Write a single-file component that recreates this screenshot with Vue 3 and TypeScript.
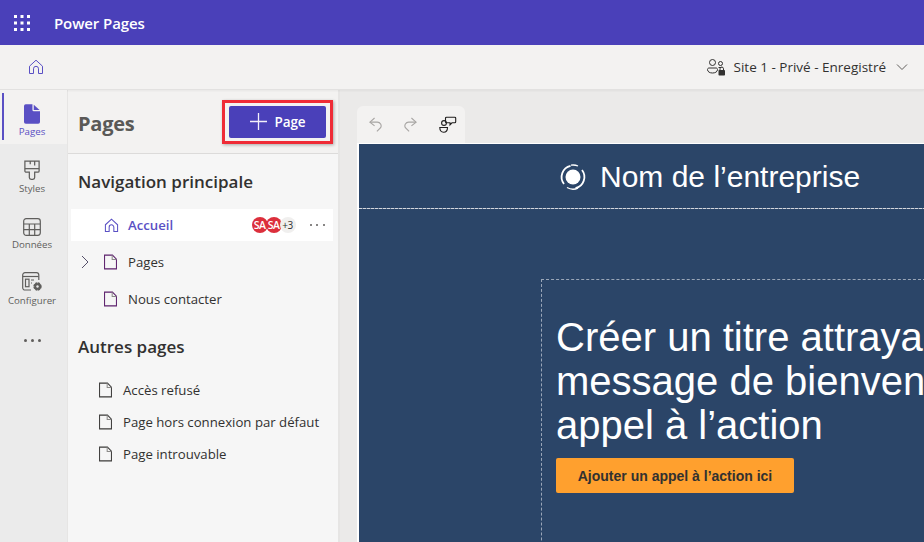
<script setup lang="ts">
interface NavItem { label: string; icon: string; active?: boolean }
const rail: NavItem[] = [
  { label: 'Pages', icon: 'pages', active: true },
  { label: 'Styles', icon: 'styles' },
  { label: 'Données', icon: 'data' },
  { label: 'Configurer', icon: 'config' },
]
const others = ['Accès refusé', 'Page hors connexion par défaut', 'Page introuvable']
const dots = [0, 1, 2]
</script>

<template>
  <div class="app">
    <header class="topbar">
      <svg class="waffle" width="18" height="18" viewBox="0 0 18 18" fill="#fff">
        <template v-for="y in dots" :key="y">
          <rect v-for="x in dots" :key="x" :x="1 + x * 6.5" :y="1 + y * 6.5" width="3" height="3" />
        </template>
      </svg>
      <span class="brand">Power Pages</span>
    </header>

    <div class="subbar">
      <svg class="home" width="16" height="16" viewBox="0 0 16 16" fill="none" stroke="#5a50c4" stroke-width="1">
        <path d="M1.5 7.2 8 1.2l6.5 6v7.3h-4V9.8a2.5 2.5 0 0 0-5 0v4.700h-4z" />
      </svg>
      <div class="site">
        <svg width="20" height="20" viewBox="0 0 20 20" fill="none" stroke="#323130">
          <circle cx="6.5" cy="5.5" r="3" />
          <path d="M1.5 12.5c0-1 .8-1.5 1.5-1.5h7c1 0 1.500.7 1.500 1.500 0 2.500-2.500 3.500-5 3.500s-5-1-5-3.500z" />
          <circle cx="14.500" cy="6.500" r="2" />
          <path d="M12.500 10.500h3" />
          <rect x="12.500" y="13" width="6.500" height="5.500" rx=".8" fill="#323130" stroke="none" />
          <path d="M14 13v-1.200a1.700 1.700 0 0 1 3.500 0V13" />
        </svg>
        <span class="site-text">Site 1 - Privé - Enregistré</span>
        <svg width="12" height="12" viewBox="0 0 12 12" fill="none" stroke="#605e5c" class="chev">
          <path d="M1 3.500 6 8.500l5-5" />
        </svg>
      </div>
    </div>

    <div class="workspace">
      <nav class="rail">
        <div v-for="item in rail" :key="item.label" class="rail-item" :class="{ active: item.active }">
          <svg v-if="item.icon === 'pages'" width="16" height="20" viewBox="0 0 18 22">
            <path fill="#5a50c4" d="M2 0h7.500v6.500a1.500 1.500 0 0 0 1.500 1.500h7v12a2 2 0 0 1-2 2H2a2 2 0 0 1-2-2V2a2 2 0 0 1 2-2z" />
            <path fill="#5a50c4" d="M11 .5 17.500 6.500H11z" />
          </svg>
          <svg v-else-if="item.icon === 'styles'" width="16" height="20" viewBox="0 0 18 22" fill="none" stroke="#5f5e5c" stroke-width="1.400">
            <path d="M1 1h16v11a1.500 1.500 0 0 1-1.500 1.500h-3.500v6a2 2 0 0 1-2 2H8a2 2 0 0 1-2-2v-6H2.500A1.500 1.500 0 0 1 1 12z" />
            <path d="M1 9.500h16" />
            <path d="M7 1v3.500M12 1v5" />
          </svg>
          <svg v-else-if="item.icon === 'data'" width="18" height="18" viewBox="0 0 18 18" fill="none" stroke="#5f5e5c" stroke-width="1.200">
            <rect x=".7" y=".7" width="16.600" height="16.600" rx="2.500" />
            <path d="M.7 6h16.600M.7 11.700h16.600M6.300 6v11.300M11.700 6v11.300" />
          </svg>
          <svg v-else width="21" height="20" viewBox="0 0 21 20" fill="none" stroke="#5f5e5c" stroke-width="1.200">
            <path d="M9 18H3a2.300 2.300 0 0 1-2.300-2.300V3A2.300 2.300 0 0 1 3 .7h11.500A2.300 2.300 0 0 1 16.800 3v5" />
            <path d="M.7 4.500h16" />
            <rect x="3.500" y="7.200" width="3.500" height="7.500" />
            <path d="M9 8h3M9 11h1" />
            <circle cx="15.500" cy="14.500" r="3.200" fill="#5f5e5c" stroke-dasharray="2 .5" stroke-width="2" />
            <circle cx="15.500" cy="14.500" r="1.200" fill="#ebebeb" stroke="none" />
          </svg>
          <span class="rail-label">{{ item.label }}</span>
        </div>
        <div class="rail-more"><i></i><i></i><i></i></div>
      </nav>

      <aside class="panel">
        <div class="panel-head">
          <h1 class="panel-title">Pages</h1>
          <div class="page-btn-ring">
            <button class="page-btn" type="button">
              <svg width="17" height="17" viewBox="0 0 17 17" stroke="#f3f0fa" stroke-width="1.300"><path d="M8.500 0v17M0 8.500h17" /></svg>
              <span>Page</span>
            </button>
          </div>
        </div>
        <div class="panel-body">
          <h2 class="section">Navigation principale</h2>
          <ul class="tree">
            <li class="row selected">
              <span class="caret"></span>
              <span class="ico">
                <svg width="15" height="15" viewBox="0 0 16 16" fill="none" stroke="#5a50c4" stroke-width="1.100">
                  <path d="M1.500 7.200 8 1.200l6.500 6v7.300h-4V9.800a2.500 2.500 0 0 0-5 0v4.700h-4z" />
                </svg>
              </span>
              <span class="accueil">Accueil</span>
              <span class="avatars">
                <span class="avatar">SA</span>
                <span class="avatar">SA</span>
                <span class="avatar more">+3</span>
              </span>
              <span class="row-more"><i></i><i></i><i></i></span>
            </li>
            <li class="row">
              <span class="caret">
                <svg width="8" height="14" viewBox="0 0 8 14" fill="none" stroke="#55506a"><path d="M1 1l6 6-6 6" /></svg>
              </span>
              <span class="ico">
                <svg width="13" height="16" viewBox="0 0 14 16" fill="none" stroke="#5b1e6b" stroke-width="1.100">
                  <path d="M.6.600h8.500L13.400 5v10.400H.6z" /><path d="M8.800.600V5.300h4.600" stroke="#8b8a88" />
                </svg>
              </span>
              <span>Pages</span>
            </li>
            <li class="row">
              <span class="caret"></span>
              <span class="ico">
                <svg width="13" height="16" viewBox="0 0 14 16" fill="none" stroke="#5b1e6b" stroke-width="1.100">
                  <path d="M.6.600h8.500L13.400 5v10.400H.6z" /><path d="M8.800.600V5.300h4.600" stroke="#8b8a88" />
                </svg>
              </span>
              <span>Nous contacter</span>
            </li>
          </ul>
          <h2 class="section second">Autres pages</h2>
          <ul class="others">
            <li v-for="label in others" :key="label" class="other">
              <svg width="13" height="16" viewBox="0 0 14 16" fill="none" stroke="#3b3a39" stroke-width="1.100">
                <path d="M.6.600h8.500L13.400 5v10.400H.6z" /><path d="M8.800.600V5.300h4.600" stroke="#8b8a88" />
              </svg>
              <span>{{ label }}</span>
            </li>
          </ul>
        </div>
      </aside>

      <main class="canvas">
        <div class="toolbar">
          <svg width="13" height="15" viewBox="0 0 14 16" fill="none" stroke="#a8a6a4" stroke-width="1.200">
            <path d="M6 1 1 5.500l5 4" /><path d="M1 5.500h8a4 4 0 0 1 3.500 6L8.500 15.500" />
          </svg>
          <svg width="13" height="15" viewBox="0 0 14 16" fill="none" stroke="#a8a6a4" stroke-width="1.200">
            <path d="M8 1l5 4.500-5 4" /><path d="M13 5.500H5a4 4 0 0 0-3.500 6l4 4" />
          </svg>
          <svg width="18" height="18" viewBox="0 0 18 18" fill="none" stroke="#201f1e" stroke-width="1.100">
            <circle cx="5" cy="7" r="2.400" />
            <path d="M.8 11.500h7.700c0 3-1.500 4.700-3.900 4.700S.8 14.500.8 11.500z" />
            <path d="M7.500 1.200h8.200a1 1 0 0 1 1 1v3.600a1 1 0 0 1-1 1h-2.700l-2 2v-2H7.500a1 1 0 0 1-1-1V2.200a1 1 0 0 1 1-1z" />
          </svg>
        </div>
        <div class="page">
          <div class="site-head">
            <svg width="28" height="28" viewBox="0 0 28 28" fill="none" stroke="#fff">
              <circle cx="14" cy="14" r="7.500" fill="#fff" stroke="none" />
              <path stroke-width="1.800" d="M5 21A11.500 11.500 0 0 1 11.500 2.800" />
              <path stroke-width="1.800" d="M23 7a11.500 11.500 0 0 1-6.500 18.200" />
              <path stroke-width="1.300" d="M8 24.500a12 12 0 0 0 11 .6M19 3a12 12 0 0 0-7-.8" />
            </svg>
            <span class="company">Nom de l’entreprise</span>
          </div>
          <div class="hero">
            <div class="hero-box">
              <h2 class="hero-title">Créer un titre attrayant<br />message de bienvenue<br />appel à l’action</h2>
              <a class="cta">Ajouter un appel à l’action ici</a>
            </div>
          </div>
        </div>
      </main>
    </div>
  </div>
</template>

<style>
html, body { margin: 0; padding: 0; overflow: hidden; }
</style>

<style scoped>
.app {
  width: 924px; height: 542px; overflow: hidden; display: flex; flex-direction: column;
  font-family: "Open Sans", "Noto Sans", sans-serif; color: #323130; background: #ebeae9;
}
.topbar { height: 45px; flex: none; background: #4a40b9; display: flex; align-items: center; padding-left: 13px; }
.waffle { flex: none; }
.brand { margin-left: 23px; color: #fff; font-size: 15px; font-weight: 600; letter-spacing: -.1px; }
.subbar {
  height: 44px; flex: none; background: #f3f2f1; border-bottom: 1px solid #e2e1e0; display: flex; align-items: center;
  padding-left: 28px; padding-right: 16px; justify-content: space-between; position: relative;
  box-shadow: 0 1px 2px rgba(0,0,0,.05);
}
.site { display: flex; align-items: center; }
.site-text { margin-left: 8px; font-size: 13.500px; color: #323130; }
.chev { margin-left: 10px; }
.workspace { flex: 1; display: flex; min-height: 0; }
.rail { width: 67px; flex: none; background: #ebebeb; display: flex; flex-direction: column; border-right: 1px solid #e6e5e4; }
.rail-item { height: 56px; display: flex; flex-direction: column; align-items: center; justify-content: flex-end; gap: 3px; color: #5f5e5c; padding: 0 3px 5px 0; box-sizing: border-box; position: relative; }
.rail-item.active { height: 54px; background: #f3f2f1; color: #5a50c4; justify-content: center; padding-bottom: 0; padding-top: 7px; gap: 2px; }
.rail-item.active::before { content: ""; position: absolute; left: 2px; top: 3px; bottom: 4px; width: 2px; background: #5a50c4; }
.rail-label { font-size: 9.700px; line-height: 12px; }
.rail-more { display: flex; justify-content: center; gap: 4px; margin-top: 27px; padding-right: 3px; }
.rail-more i, .row-more i { width: 2px; height: 2px; background: #605e5c; border-radius: 50%; display: block; }
.rail-more i { width: 3px; height: 3px; }
.panel { width: 270px; flex: none; display: flex; flex-direction: column; border-right: 2px solid #e6e5e4; }
.panel-head { height: 64px; flex: none; background: #f3f2f1; border-bottom: 1px solid #dcdbda; box-sizing: border-box; display: flex; align-items: center; justify-content: space-between; padding: 0 5px 0 10px; }
.panel-title { margin: 3px 0 0; font-size: 20px; font-weight: 700; color: #5a5957; letter-spacing: -.25px; }
.page-btn-ring { border: 3px solid #ef2b36; padding: 3px 4px; box-shadow: 1px 1px 3px rgba(0,0,0,.3); background: #f3f2f1; }
.page-btn { width: 97px; height: 32px; border: 0; border-radius: 2px; background: #4a40b9; color: #fff; display: flex; align-items: center; justify-content: center; gap: 8px; font: 600 13.500px "Open Sans", sans-serif; padding: 0; letter-spacing: -.1px; }
.panel-body { flex: 1; background: #f6f6f6; min-height: 0; padding-top: 16px; }
.section { margin: 0 0 0 10px; font-size: 17px; line-height: 24px; font-weight: 600; color: #323130; }
.section.second { margin-top: 20px; }
.tree { list-style: none; margin: 15px 0 0; padding: 0 5px 0 3px; }
.row { height: 32px; margin-bottom: 5px; display: flex; align-items: center; font-size: 13.200px; color: #323130; }
.row.selected { background: #fff; }
.caret { width: 33px; padding-left: 10px; box-sizing: border-box; flex: none; display: flex; align-items: center; }
.ico { flex: none; width: 24px; display: flex; align-items: center; }
.accueil { color: #5a50c4; font-weight: 600; }
.avatars { margin-left: auto; display: flex; }
.avatar { width: 16px; height: 16px; margin-right: -2px; border-radius: 50%; background: #dc2f3c; color: #fff; font-size: 10.500px; font-weight: 600; display: flex; align-items: center; justify-content: center; letter-spacing: -.4px; overflow: hidden; }
.avatar.more { background: #f0efee; color: #323130; font-weight: 400; font-size: 10px; margin-right: 0; }
.row-more { margin-left: 14px; margin-right: 8px; display: flex; gap: 4.700px; }
.others { list-style: none; margin: 15px 0 0; padding: 0 0 0 31px; }
.other { height: 32px; display: flex; align-items: center; gap: 11px; font-size: 13.200px; color: #323130; white-space: nowrap; }
.canvas { flex: 1; min-width: 0; padding: 16px 0 0 19px; display: flex; flex-direction: column; align-items: flex-start; overflow: hidden; }
.toolbar { height: 37px; width: 108px; flex: none; box-sizing: border-box; background: #f3f2f1; border-radius: 6px 6px 0 0; display: flex; align-items: center; gap: 22px; padding: 0 0 0 12px; margin-left: -2px; }
.page { width: 567px; flex: 1; background: #2b4568; border-top: 1px solid #fff; border-left: 2px solid #fff; margin-left: -2px; overflow: hidden; }
.site-head { height: 65px; display: flex; align-items: center; padding-left: 200px; gap: 13px; background: repeating-linear-gradient(90deg, #d3d6dc 0 3px, #6d7f97 3px 4px) left bottom / 100% 1px no-repeat; }
.company { color: #fff; font: 30px "Liberation Sans", Arial, sans-serif; white-space: nowrap; }
.hero { padding: 70px 0 0 182px; }
.hero-box { border: 1px dashed #9aa6b8; border-right: 0; border-bottom: 0; height: 300px; padding: 35px 0 0 14px; }
.hero-title { margin: 0; color: #fff; font: 400 40px/44px "Liberation Sans", Arial, sans-serif; white-space: nowrap; }
.cta { display: flex; align-items: center; justify-content: center; margin-top: 11px; width: 238px; height: 35px; background: #ffa02e; border-radius: 2px; color: #323130; font: 700 14px "Liberation Sans", Arial, sans-serif; }
</style>
